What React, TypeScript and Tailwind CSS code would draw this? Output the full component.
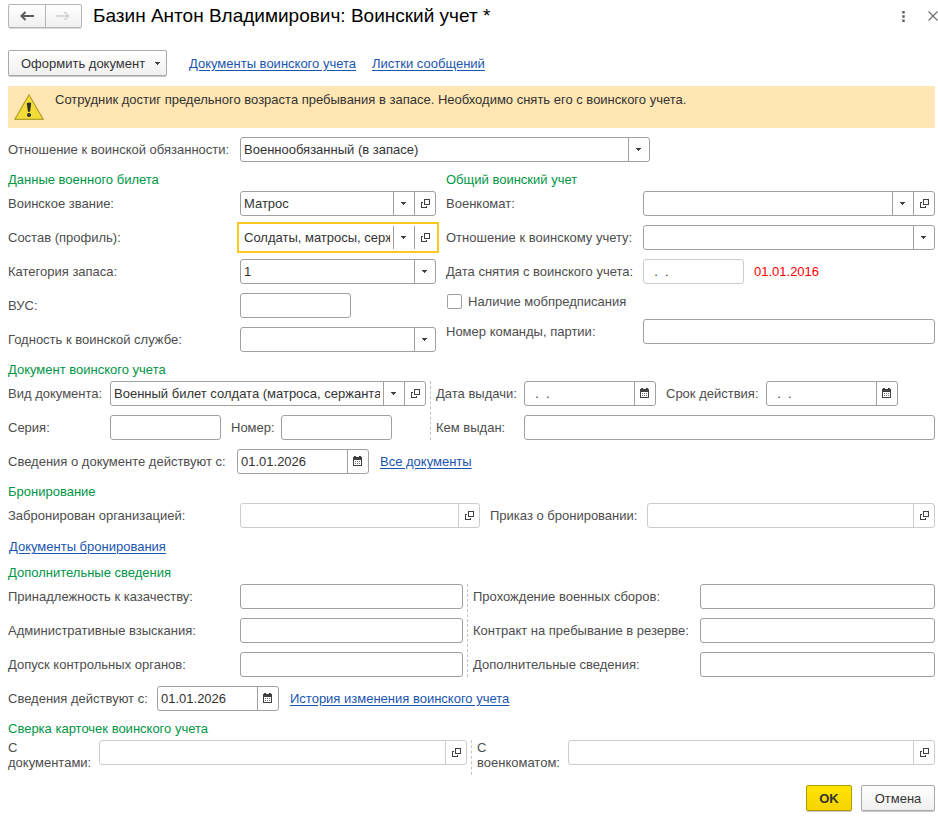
import { useId } from 'react';
import type { ReactNode } from 'react';

function CaretIcon() {
  return (
    <svg width="5" height="3" viewBox="0 0 5 3" fill="#404040" shapeRendering="crispEdges">
      <path d="M0 0h5v1H4v1H3v1H2V2H1V1H0z" />
    </svg>
  );
}

function OpenIcon() {
  return (
    <svg width="10" height="9" viewBox="0 0 10 9" fill="none" stroke="#404040" shapeRendering="crispEdges">
      <path d="M4.5 0.5h5v5h-5z" />
      <path d="M3 3.5H1.5v5h5V7" />
    </svg>
  );
}

function CalendarIcon() {
  return (
    <svg width="9" height="11" viewBox="0 0 9 11" fill="#404040" shapeRendering="crispEdges">
      <path d="M0 1h1V0h2v1h3V0h2v1h1v9H0zM1 4v5h7V4z" fillRule="evenodd" />
      <path d="M2 5h1v1H2zM4 5h1v1H4zM6 5h1v1H6zM2 7h1v1H2zM4 7h1v1H4zM6 7h1v1H6z" fill="#707070" />
    </svg>
  );
}

function WarningIcon() {
  return (
    <svg width="30" height="27" viewBox="0 0 30 27" className="mt-[2px] shrink-0">
      <path d="M15 0.8 29.2 25.4H0.8z" fill="#f2dc36" stroke="#b5a12e" strokeWidth="1.2" strokeLinejoin="round" />
      <path d="M12.8 9.2q2.2-1.6 4.4 0l-1.2 8.6h-2z" fill="#2b2b2b" />
      <circle cx="15" cy="21" r="2" fill="#2b2b2b" />
    </svg>
  );
}

interface FieldProps {
  label: string;
  kind?: 'text' | 'select';
  value?: string;
  labelClass?: string;
  boxClass?: string;
  actions?: ('open' | 'calendar')[];
  disabled?: boolean;
  active?: boolean;
  top?: boolean;
}

function Field({
  label,
  kind = 'text',
  value = '',
  labelClass = '',
  boxClass = 'flex-1',
  actions = [],
  disabled,
  active,
  top,
}: FieldProps) {
  const id = useId();
  const border = disabled ? 'border-[#cccccc]' : 'border-[#a0a0a0]';
  const frame = active
    ? 'border-transparent outline-2 outline-offset-1 outline-[#fcc81f]'
    : `rounded-[3px] ${border}`;

  return (
    <div className={`flex min-w-0 ${top ? 'items-start' : 'items-center'}`}>
      <label htmlFor={id} className={`shrink-0 ${labelClass}`}>{label}</label>
      <div className={`flex h-[25px] min-w-0 border bg-white text-[#333333] ${frame} ${boxClass}`}>
        {kind === 'select' ? (
          <div className="relative flex min-w-0 flex-1">
            <select id={id} defaultValue={value} className="w-full min-w-0 appearance-none bg-transparent pl-[3px] pr-6 outline-none">
              <option value={value}>{value}</option>
            </select>
            <span className={`pointer-events-none absolute inset-y-0 right-0 flex w-[21px] items-center justify-center border-l pr-px ${border}`}>
              <CaretIcon />
            </span>
          </div>
        ) : (
          <input id={id} type="text" defaultValue={value} disabled={disabled} className="w-full min-w-0 flex-1 bg-transparent px-[3px] outline-none" />
        )}
        {actions.map(action => (
          <button
            key={action}
            type="button"
            aria-label={action === 'open' ? 'Открыть' : 'Календарь'}
            className={`flex w-[21px] shrink-0 items-center justify-center border-l ${action === 'calendar' ? 'pr-px' : ''} ${border}`}
          >
            {action === 'open' ? <OpenIcon /> : <CalendarIcon />}
          </button>
        ))}
      </div>
    </div>
  );
}

function SectionTitle({ children }: { children: ReactNode }) {
  return <h2 className="mt-[9px] mb-[2px] h-[18px] leading-[18px] text-[#009646]">{children}</h2>;
}

function Link({ children }: { children: ReactNode }) {
  return <a href="#" className="text-[#1a55b0] underline underline-offset-2">{children}</a>;
}

const EMPTY_DATE = '  .  .    ';

export default function App() {
  return (
    <div className="bg-white pt-1 pr-[3px] pb-[5px] pl-2 font-['Liberation_Sans',Arial,sans-serif] text-[13px] leading-[15px] text-[#4d4d4d]">
      <header className="-mr-[3px] flex h-6 items-center">
        <div className="flex h-6 w-[74px] rounded-[2px] border border-[#b5b5b5] bg-linear-to-b from-white to-[#f0f0f0] shadow-[0_1px_0_#d8d8d8]">
          <button type="button" aria-label="Назад" className="flex flex-1 items-center justify-center border-r border-[#b5b5b5]">
            <svg width="14" height="10" viewBox="0 0 14 10" fill="none" stroke="#5c5c5c" strokeWidth="2">
              <path d="M14 5H2M5.5 1l-4 4 4 4" />
            </svg>
          </button>
          <button type="button" aria-label="Вперед" disabled className="flex flex-1 items-center justify-center">
            <svg width="14" height="10" viewBox="0 0 14 10" fill="none" stroke="#cfcfcf" strokeWidth="1.6">
              <path d="M0 5h12M8.5 1l4 4-4 4" />
            </svg>
          </button>
        </div>
        <h1 className="ml-[11px] flex-1 text-[19px] leading-6 text-black">Базин Антон Владимирович: Воинский учет *</h1>
        <button type="button" aria-label="Меню" className="mr-[22px] p-[1px]">
          <svg width="3" height="11" viewBox="0 0 3 11" fill="#5c5c5c">
            <path d="M0.3 0h2.4v2.4H0.3zM0.3 4.3h2.4v2.4H0.3zM0.3 8.6h2.4V11H0.3z" />
          </svg>
        </button>
        <button type="button" aria-label="Закрыть">
          <svg width="10" height="10" viewBox="0 0 10 10" fill="none" stroke="#6a6a6a" strokeWidth="1.1">
            <path d="M0.5 0.5l9 9M9.5 0.5l-9 9" />
          </svg>
        </button>
      </header>

      <div className="mt-[22px] flex h-[26px] items-center">
        <button type="button" className="flex h-[26px] w-[159px] items-center justify-between rounded-[2px] border border-[#a8a8a8] bg-linear-to-b from-white to-[#f0f0f0] pr-[6px] pl-3 text-[#333333] shadow-[0_1px_0_#c8c8c8]">
          Оформить документ
          <CaretIcon />
        </button>
        <nav className="ml-[22px] flex gap-4">
          <Link>Документы воинского учета</Link>
          <Link>Листки сообщений</Link>
        </nav>
      </div>

      <div className="mt-[10px] flex h-[42px] bg-[#ffe6b3] pt-[6px] pl-[6px] text-[#333333]">
        <WarningIcon />
        <p className="ml-[11px]">Сотрудник достиг предельного возраста пребывания в запасе. Необходимо снять его с воинского учета.</p>
      </div>

      <div className="mt-[9px]">
        <Field label="Отношение к воинской обязанности:" kind="select" value="Военнообязанный (в запасе)" labelClass="w-[232px]" boxClass="w-[410px]" />
      </div>

      <div className="flex gap-[10px]">
        <section className="w-[428px] shrink-0">
          <SectionTitle>Данные военного билета</SectionTitle>
          <div className="flex flex-col gap-[9px]">
            <Field label="Воинское звание:" kind="select" value="Матрос" labelClass="w-[232px]" actions={['open']} />
            <Field label="Состав (профиль):" kind="select" value="Солдаты, матросы, сержанты, старшины" labelClass="w-[232px]" actions={['open']} active />
            <Field label="Категория запаса:" kind="select" value="1" labelClass="w-[232px]" />
            <Field label="ВУС:" labelClass="w-[232px]" boxClass="w-[111px]" />
            <Field label="Годность к воинской службе:" kind="select" labelClass="w-[232px]" />
          </div>
        </section>
        <section className="min-w-0 flex-1">
          <SectionTitle>Общий воинский учет</SectionTitle>
          <div className="flex flex-col gap-[9px]">
            <Field label="Военкомат:" kind="select" labelClass="w-[197px]" actions={['open']} />
            <Field label="Отношение к воинскому учету:" kind="select" labelClass="w-[197px]" />
            <div className="flex items-center gap-[10px]">
              <Field label="Дата снятия с воинского учета:" value={EMPTY_DATE} labelClass="w-[197px]" boxClass="w-[101px]" disabled />
              <span className="text-[#ff0000]">01.01.2016</span>
            </div>
            <label className="flex h-[17px] items-center gap-[6px]">
              <input type="checkbox" className="ml-px size-[15px] appearance-none rounded-[2px] border border-[#a0a0a0] bg-white checked:bg-[#4d4d4d]" />
              Наличие мобпредписания
            </label>
            <Field label="Номер команды, партии:" labelClass="w-[197px]" />
          </div>
        </section>
      </div>

      <section>
        <SectionTitle>Документ воинского учета</SectionTitle>
        <div className="flex gap-1">
          <div className="flex w-[418px] shrink-0 flex-col gap-[9px]">
            <Field label="Вид документа:" kind="select" value="Военный билет солдата (матроса, сержанта, старшины)" labelClass="w-[102px]" actions={['open']} />
            <div className="flex gap-[10px]">
              <Field label="Серия:" labelClass="w-[102px]" boxClass="w-[111px]" />
              <Field label="Номер:" labelClass="w-[50px]" boxClass="w-[111px]" />
            </div>
          </div>
          <div className="flex min-w-0 flex-1 flex-col gap-[9px] border-l border-dashed border-[#c4c4c4] pl-[5px]">
            <div className="flex gap-[10px]">
              <Field label="Дата выдачи:" value={EMPTY_DATE} labelClass="w-[88px]" boxClass="w-[132px]" actions={['calendar']} />
              <Field label="Срок действия:" value={EMPTY_DATE} labelClass="w-[100px]" boxClass="w-[132px]" actions={['calendar']} />
            </div>
            <Field label="Кем выдан:" labelClass="w-[88px]" />
          </div>
        </div>
        <div className="mt-[9px] flex items-center gap-[11px]">
          <Field label="Сведения о документе действуют с:" value="01.01.2026" labelClass="w-[229px]" boxClass="w-[132px]" actions={['calendar']} />
          <Link>Все документы</Link>
        </div>
      </section>

      <section>
        <SectionTitle>Бронирование</SectionTitle>
        <div className="flex gap-[10px]">
          <div className="w-[472px] shrink-0">
            <Field label="Забронирован организацией:" labelClass="w-[232px]" actions={['open']} disabled />
          </div>
          <div className="min-w-0 flex-1">
            <Field label="Приказ о бронировании:" labelClass="w-[157px]" actions={['open']} disabled />
          </div>
        </div>
        <div className="mt-[9px] h-[18px] pl-px leading-5">
          <Link>Документы бронирования</Link>
        </div>
      </section>

      <section>
        <SectionTitle>Дополнительные сведения</SectionTitle>
        <div className="grid grid-cols-[455fr_468fr] gap-1">
          <div className="flex min-w-0 flex-col gap-[9px]">
            <Field label="Принадлежность к казачеству:" labelClass="w-[232px]" />
            <Field label="Административные взыскания:" labelClass="w-[232px]" />
            <Field label="Допуск контрольных органов:" labelClass="w-[232px]" />
          </div>
          <div className="flex min-w-0 flex-col gap-[9px] border-l border-dashed border-[#c4c4c4] pl-[5px]">
            <Field label="Прохождение военных сборов:" labelClass="w-[227px]" />
            <Field label="Контракт на пребывание в резерве:" labelClass="w-[227px]" />
            <Field label="Дополнительные сведения:" labelClass="w-[227px]" />
          </div>
        </div>
        <div className="mt-[9px] flex items-center gap-[11px]">
          <Field label="Сведения действуют с:" value="01.01.2026" labelClass="w-[149px]" boxClass="w-[122px]" actions={['calendar']} />
          <Link>История изменения воинского учета</Link>
        </div>
      </section>

      <section>
        <SectionTitle>Сверка карточек воинского учета</SectionTitle>
        <div className="grid grid-cols-[459fr_464fr] gap-1">
          <Field label="С документами:" labelClass="w-[91px]" actions={['open']} disabled top />
          <div className="min-w-0 border-l border-dashed border-[#c4c4c4] pb-[5px] pl-[5px]">
            <Field label="С военкоматом:" labelClass="w-[91px]" actions={['open']} disabled top />
          </div>
        </div>
      </section>

      <footer className="mt-[10px] flex justify-end gap-[9px]">
        <button type="button" className="h-[26px] w-[46px] rounded-[2px] border border-[#b09a00] bg-linear-to-b from-[#ffe600] to-[#f5d300] font-bold text-[#333333] shadow-[0_1px_0_#c8c8c8]">
          OK
        </button>
        <button type="button" className="h-[26px] w-[74px] rounded-[2px] border border-[#a8a8a8] bg-linear-to-b from-white to-[#f0f0f0] text-[#333333] shadow-[0_1px_0_#c8c8c8]">
          Отмена
        </button>
      </footer>
    </div>
  );
}
